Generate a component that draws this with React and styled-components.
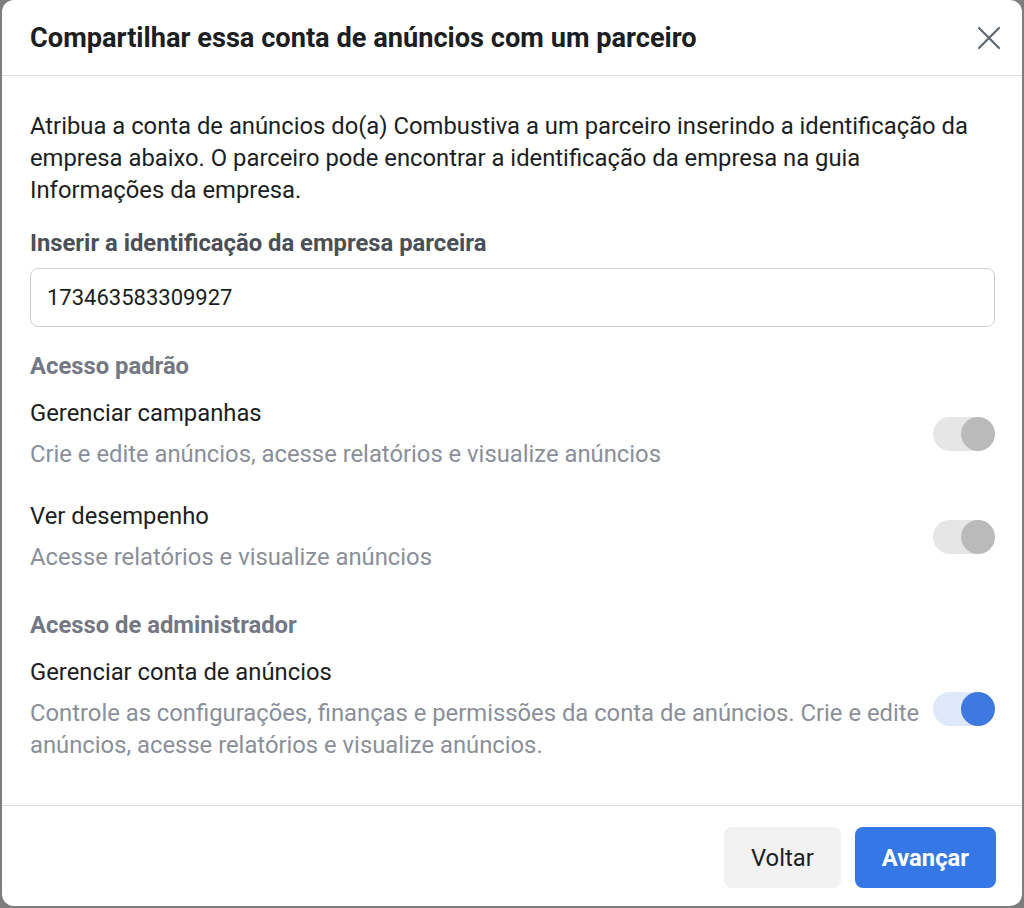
import React from "react";
import styled, { createGlobalStyle } from "styled-components";

const GlobalStyle = createGlobalStyle`
	html, body {
		margin: 0;
		padding: 0;
		background: #7d7d7d;
	}
	body {
		font-family: Roboto, "Liberation Sans", Arial, sans-serif;
		-webkit-font-smoothing: antialiased;
	}
`;

const Overlay = styled.div`
	display: flex;
	justify-content: center;
	height: 908px;
`;

const Modal = styled.div`
	display: flex;
	flex-direction: column;
	width: 1020px;
	height: 906px;
	background: #fff;
	border-radius: 12px;
	overflow: hidden;
`;

const Header = styled.div`
	display: flex;
	align-items: center;
	justify-content: space-between;
	height: 75px;
	padding: 0 15px 0 28px;
	border-bottom: 1px solid #dadde1;
	flex-shrink: 0;
`;

const Title = styled.h1`
	margin: 0;
	font-size: 27.2px;
	font-weight: 700;
	color: #1c1e21;
`;

const CloseButton = styled.button`
	display: flex;
	align-items: center;
	justify-content: center;
	width: 36px;
	height: 36px;
	padding: 0;
	border: none;
	background: none;
	cursor: pointer;
`;

const Body = styled.div`
	flex: 1;
	padding: 34px 27px 0 28px;
`;

const Intro = styled.p`
	margin: 0;
	font-size: 23.8px;
	line-height: 32px;
	color: #1c1e21;
`;

const FieldLabel = styled.label`
	display: block;
	margin-top: 23px;
	font-size: 23.8px;
	line-height: 28px;
	font-weight: 700;
	color: #4b4f56;
`;

const Input = styled.input`
	display: block;
	box-sizing: border-box;
	width: 100%;
	height: 59px;
	margin-top: 11px;
	padding: 0 16px;
	border: 1px solid #ccd0d5;
	border-radius: 8px;
	font-family: Roboto, "Liberation Sans", Arial, sans-serif;
	font-size: 22px;
	color: #1c1e21;
	outline: none;
`;

const SectionTitle = styled.div`
	margin-top: ${(p) => p.$top}px;
	font-size: 23.8px;
	line-height: 28px;
	font-weight: 700;
	color: #737884;
`;

const Row = styled.div`
	display: flex;
	align-items: center;
	justify-content: space-between;
	margin-top: ${(p) => p.$top}px;
`;

const RowText = styled.div`
	flex: 1;
`;

const RowTitle = styled.div`
	font-size: 23.8px;
	line-height: 32px;
	color: #1c1e21;
`;

const RowDesc = styled.div`
	margin-top: 9px;
	font-size: 23.8px;
	line-height: 32px;
	color: #8a8f99;
`;

const Track = styled.div`
	position: relative;
	flex-shrink: 0;
	width: 62px;
	height: 34px;
	border-radius: 17px;
	background: ${(p) => (p.$on ? "#dde8fa" : "#e6e6e6")};
`;

const Knob = styled.div`
	position: absolute;
	top: 0;
	right: 0;
	width: 34px;
	height: 34px;
	border-radius: 50%;
	background: ${(p) => (p.$on ? "#3e79df" : "#bababa")};
`;

const Footer = styled.div`
	display: flex;
	justify-content: flex-end;
	gap: 14px;
	height: 101px;
	box-sizing: border-box;
	padding: 21px 26px 0 0;
	border-top: 1px solid #dadde1;
	flex-shrink: 0;
`;

const Button = styled.button`
	height: 61px;
	padding: 0 27px;
	border: none;
	border-radius: 8px;
	font-family: inherit;
	font-size: 23.8px;
	font-weight: ${(p) => (p.$primary ? 700 : 400)};
	color: ${(p) => (p.$primary ? "#fff" : "#1c1e21")};
	background: ${(p) => (p.$primary ? "#3578e5" : "#f2f2f2")};
	cursor: pointer;
`;

function Toggle({ on }) {
	return (
		<Track $on={on}>
			<Knob $on={on} />
		</Track>
	);
}

const permissions = [
	{
		section: "Acesso padrão",
		sectionTop: 25,
		items: [
			{
				title: "Gerenciar campanhas",
				desc: "Crie e edite anúncios, acesse relatórios e visualize anúncios",
				top: 17,
			},
			{
				title: "Ver desempenho",
				desc: "Acesse relatórios e visualize anúncios",
				top: 30,
			},
		],
	},
	{
		section: "Acesso de administrador",
		sectionTop: 38,
		items: [
			{
				title: "Gerenciar conta de anúncios",
				desc: "Controle as configurações, finanças e permissões da conta de anúncios. Crie e edite anúncios, acesse relatórios e visualize anúncios.",
				top: 17,
				on: true,
			},
		],
	},
];

export default function App() {
	return (
		<>
			<GlobalStyle />
			<Overlay>
				<Modal>
					<Header>
						<Title>Compartilhar essa conta de anúncios com um parceiro</Title>
						<CloseButton aria-label="Fechar">
							<svg width="24" height="24" viewBox="0 0 24 24">
								<path
									d="M2 2 L22 22 M22 2 L2 22"
									stroke="#606770"
									strokeWidth="2.2"
									strokeLinecap="round"
								/>
							</svg>
						</CloseButton>
					</Header>
					<Body>
						<Intro>
							Atribua a conta de anúncios do(a) Combustiva a um parceiro inserindo a identificação da
							empresa abaixo. O parceiro pode encontrar a identificação da empresa na guia
							Informações da empresa.
						</Intro>
						<FieldLabel>Inserir a identificação da empresa parceira</FieldLabel>
						<Input defaultValue="173463583309927" />
						{permissions.map((group) => (
							<React.Fragment key={group.section}>
								<SectionTitle $top={group.sectionTop}>{group.section}</SectionTitle>
								{group.items.map((item) => (
									<Row key={item.title} $top={item.top}>
										<RowText>
											<RowTitle>{item.title}</RowTitle>
											<RowDesc>{item.desc}</RowDesc>
										</RowText>
										<Toggle on={!!item.on} />
									</Row>
								))}
							</React.Fragment>
						))}
					</Body>
					<Footer>
						<Button>Voltar</Button>
						<Button $primary>Avançar</Button>
					</Footer>
				</Modal>
			</Overlay>
		</>
	);
}
